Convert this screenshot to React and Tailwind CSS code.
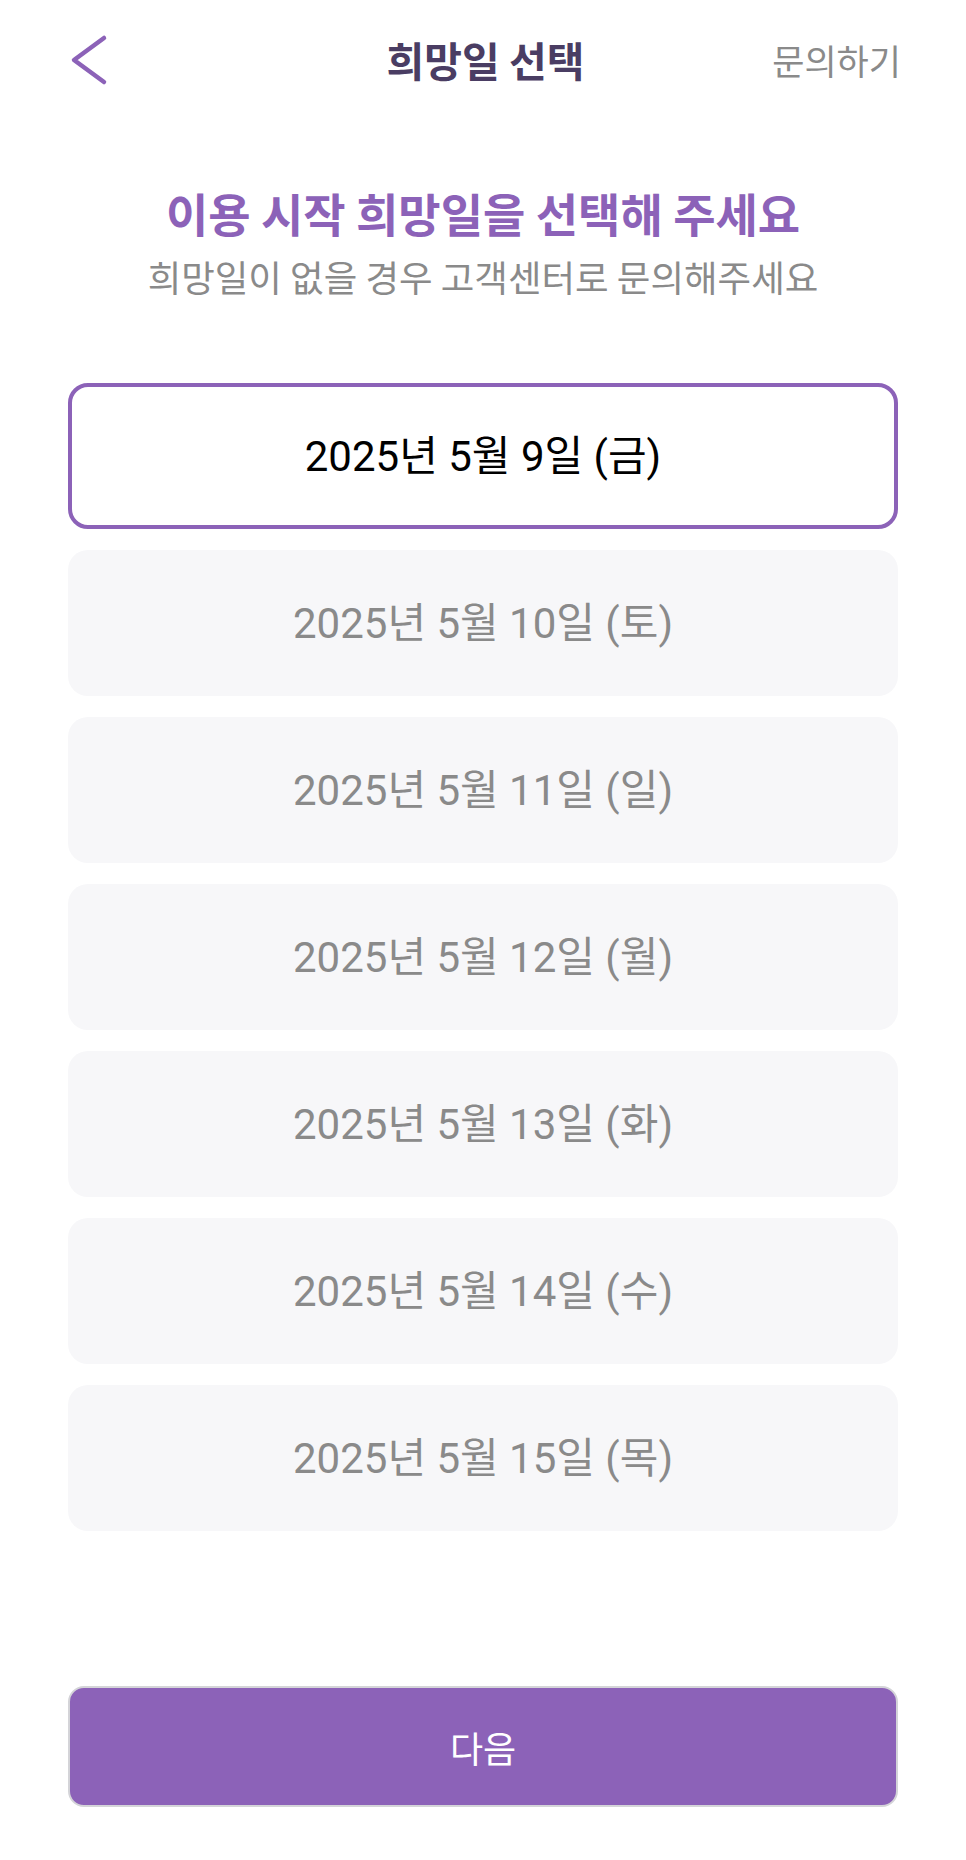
import React, { useState } from "react";

const dates = [
  "2025년 5월 9일 (금)",
  "2025년 5월 10일 (토)",
  "2025년 5월 11일 (일)",
  "2025년 5월 12일 (월)",
  "2025년 5월 13일 (화)",
  "2025년 5월 14일 (수)",
  "2025년 5월 15일 (목)",
];

export default function App() {
  const [selected, setSelected] = useState(0);

  return (
    <div className="w-full h-[1860px] bg-white flex flex-col font-['Noto_Sans_CJK_KR','Noto_Sans',sans-serif]">
      {/* header */}
      <header className="h-[120px] grid grid-cols-[1fr_auto_1fr] items-center pl-[70px] pr-[65px]">
        <button className="w-[40px] h-[52px]">
          <svg width="40" height="52" viewBox="0 0 40 52" fill="none">
            <path
              d="M34 4 L4 26 L34 48"
              stroke="#8c62b8"
              strokeWidth="4.5"
              strokeLinecap="round"
              strokeLinejoin="round"
            />
          </svg>
        </button>
        <h1 className="text-[41px] leading-[52px] font-bold text-[#4a3d63] -mt-[2px]">
          희망일 선택
        </h1>
        <div className="flex justify-end">
          <button className="text-[35px] leading-[46px] text-[#8a8a8a]">문의하기</button>
        </div>
      </header>

      <div className="flex flex-col items-center">
        <h2 className="mt-[62px] text-[46px] leading-[60px] font-bold text-[#8c62b8]">
          이용 시작 희망일을 선택해 주세요
        </h2>
        <p className="mt-[12px] text-[36.5px] leading-[46px] text-[#8a8a8a]">
          희망일이 없을 경우 고객센터로 문의해주세요
        </p>
      </div>

      <div className="mt-[83px] px-[68px] flex flex-col gap-[21px] font-['Roboto','Noto_Sans_CJK_KR',sans-serif]">
        {dates.map((d, i) =>
          i === selected ? (
            <button
              key={d}
              onClick={() => setSelected(i)}
              className="h-[146px] rounded-[20px] border-4 border-[#8c62b8] bg-white text-[42px] text-black flex items-center justify-center"
            >
              {d}
            </button>
          ) : (
            <button
              key={d}
              onClick={() => setSelected(i)}
              className="h-[146px] rounded-[20px] bg-[#f7f7f9] text-[42px] text-[#8a8a8a] flex items-center justify-center"
            >
              {d}
            </button>
          )
        )}
      </div>

      <div className="mt-[155px] px-[68px]">
        <button className="w-full h-[121px] rounded-[16px] border-2 border-[#d4d4d8] bg-[#8c62b8] text-white text-[36px] flex items-center justify-center">
          다음
        </button>
      </div>
    </div>
  );
}
